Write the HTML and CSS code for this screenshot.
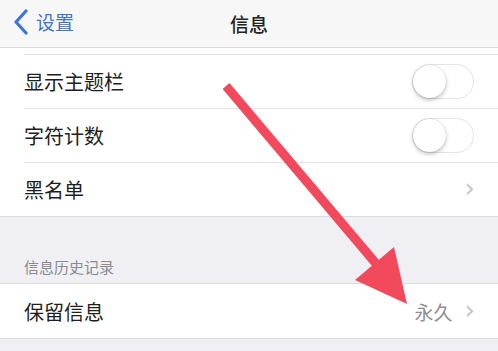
FILE: index.html
```html
<!DOCTYPE html>
<html lang="zh-CN">
<head>
    <meta charset="UTF-8">
    <title>信息</title>
    <link rel="stylesheet" href="styles.css">
</head>
<body>

    <!-- Navigation Bar -->
    <div class="navbar">
        <a class="back" href="#">
            <svg class="back-icon" viewBox="0 0 16 26" width="16" height="26">
                <path d="M13 2 L3 13 L13 24" fill="none" stroke="#3d74d6" stroke-width="3.2" stroke-linecap="round" stroke-linejoin="round"/>
            </svg>
            <span>设置</span>
        </a>
        <h1>信息</h1>
    </div>

    <div class="group first">
        <div class="row">
            <span class="label">显示主题栏</span>
            <span class="switch"><span class="knob"></span></span>
        </div>
        <div class="row">
            <span class="label">字符计数</span>
            <span class="switch"><span class="knob"></span></span>
        </div>
        <div class="row">
            <span class="label">黑名单</span>
            <span class="chevron">›</span>
        </div>
    </div>

    <div class="section-title">信息历史记录</div>

    <div class="group">
        <div class="row single">
            <span class="label">保留信息</span>
            <span class="value">永久</span>
            <span class="chevron">›</span>
        </div>
    </div>

    <!-- red arrow drawn over the screenshot -->
    <svg class="arrow" width="498" height="351" viewBox="0 0 498 351">
        <line x1="226" y1="86" x2="378" y2="266" stroke="#f24a5c" stroke-width="9" stroke-linecap="butt"/>
        <polygon points="355,280 394,247 407,304" fill="#f24a5c"/>
    </svg>

</body>
</html>
```

FILE: styles.css
```css
body {
    margin: 0;
    background-color: #efeff4;
    font-family: "Noto Sans CJK SC", "Noto Sans", sans-serif;
    color: #1e1e1e;
    width: 498px;
    height: 351px;
    overflow: hidden;
    position: relative;
}

.navbar {
    height: 47px;
    background-color: #f7f7f7;
    border-bottom: 1px solid #d9d9d9;
    display: flex;
    align-items: center;
    justify-content: center;
    position: relative;
}
.navbar h1 {
    margin: 0;
    font-size: 19px;
    font-weight: 500;
    color: #222;
}
.back {
    position: absolute;
    left: 13px;
    top: 8px;
    display: flex;
    align-items: center;
    gap: 7px;
    text-decoration: none;
    color: #4173c9;
    font-size: 19px;
}
.back-icon {
    display: block;
}

.group {
    background: white;
    border-bottom: 1px solid #dcdcdc;
}
.group.first {
    padding-top: 6px;
}
.group:not(.first) {
    border-top: 1px solid #dcdcdc;
}

.row {
    margin-left: 24px;
    padding-right: 23px;
    height: 53px;
    border-top: 1px solid #e2e2e2;
    display: flex;
    align-items: center;
    font-size: 20px;
}
.row.single {
    border-top: none;
    height: 54px;
}
.label {
    flex: 1;
}

.switch {
    width: 60px;
    height: 33px;
    border: 1px solid #e4e4e4;
    border-radius: 18px;
    background: white;
    position: relative;
    margin-right: 1px;
}
.knob {
    position: absolute;
    left: 0;
    top: 0;
    width: 33px;
    height: 33px;
    border-radius: 50%;
    background: white;
    box-shadow: 0 2px 4px rgba(0, 0, 0, 0.25), 0 0 1px rgba(0, 0, 0, 0.2);
}

.chevron {
    color: #c4c4c7;
    font-size: 26px;
    font-family: "DejaVu Sans", sans-serif;
    line-height: 1;
    margin-top: -3px;
}
.value {
    color: #8e8e93;
    font-size: 19px;
    margin-right: 12px;
}

.section-title {
    height: 66px;
    box-sizing: border-box;
    padding: 36px 0 0 24px;
    font-size: 15px;
    color: #8a8a8f;
    line-height: 28px;
}

.arrow {
    position: absolute;
    left: 0;
    top: 0;
}
```
